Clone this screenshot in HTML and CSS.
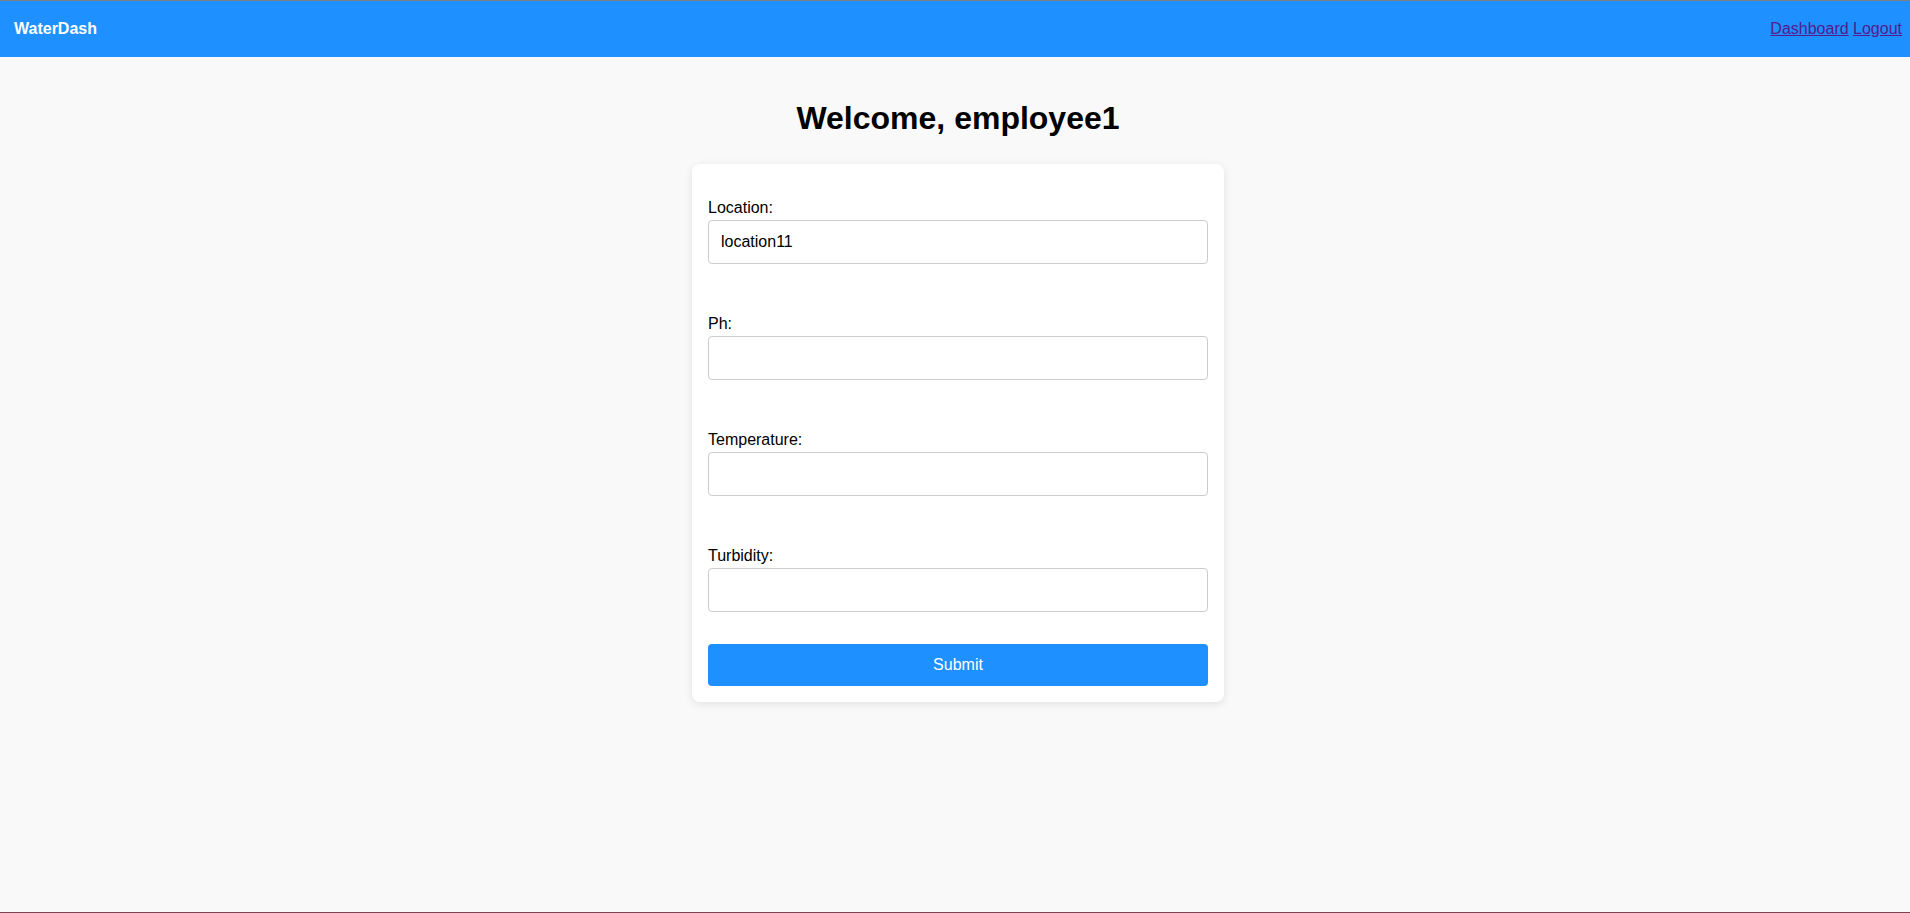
FILE: index.html
```html
<!DOCTYPE html>
<html lang="en">
<head>
  <meta charset="utf-8">
  <title>WaterDash</title>
  <link rel="stylesheet" href="styles.css">
</head>
<body class="page">
  <header class="navbar">
    <span class="brand">WaterDash</span>
    <nav class="links">
      <a href="#dashboard">Dashboard</a>
      <a href="#logout">Logout</a>
    </nav>
  </header>
  <main class="content">
    <h1 class="title">Welcome, employee1</h1>
    <form class="card">
      <div class="field">
        <label for="location">Location:</label>
        <input id="location" type="text" value="location11">
      </div>
      <div class="field">
        <label for="ph">Ph:</label>
        <input id="ph" type="text">
      </div>
      <div class="field">
        <label for="temperature">Temperature:</label>
        <input id="temperature" type="text">
      </div>
      <div class="field">
        <label for="turbidity">Turbidity:</label>
        <input id="turbidity" type="text">
      </div>
      <button class="submit" type="submit">Submit</button>
    </form>
  </main>
</body>
</html>
```

FILE: styles.css
```css
* {
  box-sizing: border-box;
}

.page {
  display: flex;
  flex-direction: column;
  min-height: 100vh;
  margin: 0;
  border-top: 1px solid #808080;
  border-bottom: 1px solid #7a4452;
  background: #f9f9f9;
  color: #000;
  font-family: "Liberation Sans", Arial, sans-serif;
  font-size: 16px;
  line-height: 18px;
}

.navbar {
  display: flex;
  justify-content: space-between;
  align-items: center;
  padding: 19px 8px 19px 14px;
  background: #1e90ff;
}

.brand {
  color: #fff;
  font-weight: bold;
}

.links a {
  color: #551a8b;
  text-decoration: underline;
}

.content {
  display: flex;
  flex-direction: column;
  align-items: center;
  padding: 43px 0 32px 6px;
}

.title {
  margin: 0 0 27px;
  font-size: 32px;
  line-height: 37px;
}

.card {
  display: flex;
  flex-direction: column;
  width: 100%;
  max-width: 532px;
  padding: 35px 16px 16px;
  border-radius: 8px;
  background: #fff;
  box-shadow: 0 2px 8px rgba(0, 0, 0, 0.1);
}

.field {
  display: flex;
  flex-direction: column;
  gap: 3px;
  margin-bottom: 51px;
}

.field:last-of-type {
  margin-bottom: 32px;
}

.field input {
  height: 44px;
  padding: 0 12px;
  border: 1px solid #ccc;
  border-radius: 4px;
  background: #fff;
  color: #000;
  font: inherit;
}

.submit {
  padding: 12px;
  border: 0;
  border-radius: 4px;
  background: #1e90ff;
  color: #fff;
  font: inherit;
}
```
